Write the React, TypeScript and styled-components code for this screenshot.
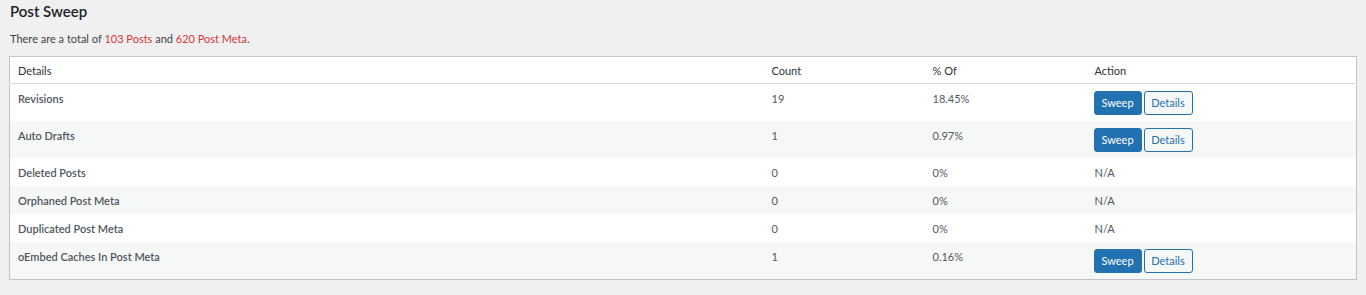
import React from "react";
import styled, { createGlobalStyle } from "styled-components";

const Global = createGlobalStyle`
  html, body { margin: 0; padding: 0; background: #f0f0f1; }
  body { font-family: Lato, "Open Sans", sans-serif; color: #3c434a; }
`;

const Wrap = styled.div`
  padding: 0 9px 0 9px;
`;

const Title = styled.h2`
  margin: 0;
  padding: 1px 0 0 1px;
  font-size: 15px;
  line-height: 20px;
  font-weight: 600;
  color: #1d2327;
`;

const Summary = styled.p`
  margin: 10px 0 0 1px;
  font-size: 11px;
  line-height: 16px;
  color: #3c434a;
`;

const Hl = styled.span`
  color: #d63638;
`;

const Table = styled.table`
  margin-top: 9px;
  width: 100%;
  border-collapse: collapse;
  table-layout: fixed;
  background: #fff;
  border: 1px solid #c3c4c7;
  box-shadow: 0 1px 1px rgba(0, 0, 0, 0.04);
  font-size: 11px;
`;

const Th = styled.th<{ $w?: number }>`
  ${(p) => (p.$w ? `width: ${p.$w}px;` : "")}
  box-sizing: border-box;
  text-align: left;
  font-weight: 400;
  color: #2c3338;
  padding: 7px 8px 5px;
  line-height: 14px;
  border-bottom: 1px solid #dcdcde;
`;

const Row = styled.tr<{ $alt: boolean }>`
  background: ${(p) => (p.$alt ? "#f6f7f7" : "#fff")};
`;

const Td = styled.td<{ $strong?: boolean }>`
  vertical-align: top;
  padding: 8px 8px 6px;
  line-height: 14px;
  color: #50575e;
  font-weight: ${(p) => (p.$strong ? 600 : 400)};
`;

const ActionTd = styled.td<{ $btn: boolean }>`
  vertical-align: top;
  padding: ${(p) => (p.$btn ? "7px 8px 6px 7px" : "8px 8px 6px")};
  line-height: 14px;
  color: #50575e;
`;

const Actions = styled.div`
  display: flex;
  gap: 2px;
`;

const Btn = styled.button<{ $primary?: boolean }>`
  box-sizing: border-box;
  height: 24px;
  width: ${(p) => (p.$primary ? 48 : 49)}px;
  padding: 0;
  font-family: inherit;
  font-size: 11px;
  line-height: 22px;
  border-radius: 3px;
  border: 1px solid #2271b1;
  background: ${(p) => (p.$primary ? "#2271b1" : "#f6f7f7")};
  color: ${(p) => (p.$primary ? "#fff" : "#2271b1")};
  cursor: pointer;
`;

const rows = [
  { name: "Revisions", count: "19", pct: "18.45%", btn: true },
  { name: "Auto Drafts", count: "1", pct: "0.97%", btn: true },
  { name: "Deleted Posts", count: "0", pct: "0%", btn: false },
  { name: "Orphaned Post Meta", count: "0", pct: "0%", btn: false },
  { name: "Duplicated Post Meta", count: "0", pct: "0%", btn: false },
  { name: "oEmbed Caches In Post Meta", count: "1", pct: "0.16%", btn: true },
];

export default function App() {
  return (
    <Wrap>
      <Global />
      <Title>Post Sweep</Title>
      <Summary>
        There are a total of <Hl>103 Posts</Hl> and <Hl>620 Post Meta</Hl>.
      </Summary>
      <Table>
        <thead>
          <tr>
            <Th $w={754}>Details</Th>
            <Th $w={161}>Count</Th>
            <Th $w={162}>% Of</Th>
            <Th>Action</Th>
          </tr>
        </thead>
        <tbody>
          {rows.map((r, i) => (
            <Row key={r.name} $alt={i % 2 === 1}>
              <Td $strong>{r.name}</Td>
              <Td>{r.count}</Td>
              <Td>{r.pct}</Td>
              <ActionTd $btn={r.btn}>
                {r.btn ? (
                  <Actions>
                    <Btn $primary>Sweep</Btn>
                    <Btn>Details</Btn>
                  </Actions>
                ) : (
                  "N/A"
                )}
              </ActionTd>
            </Row>
          ))}
        </tbody>
      </Table>
    </Wrap>
  );
}
